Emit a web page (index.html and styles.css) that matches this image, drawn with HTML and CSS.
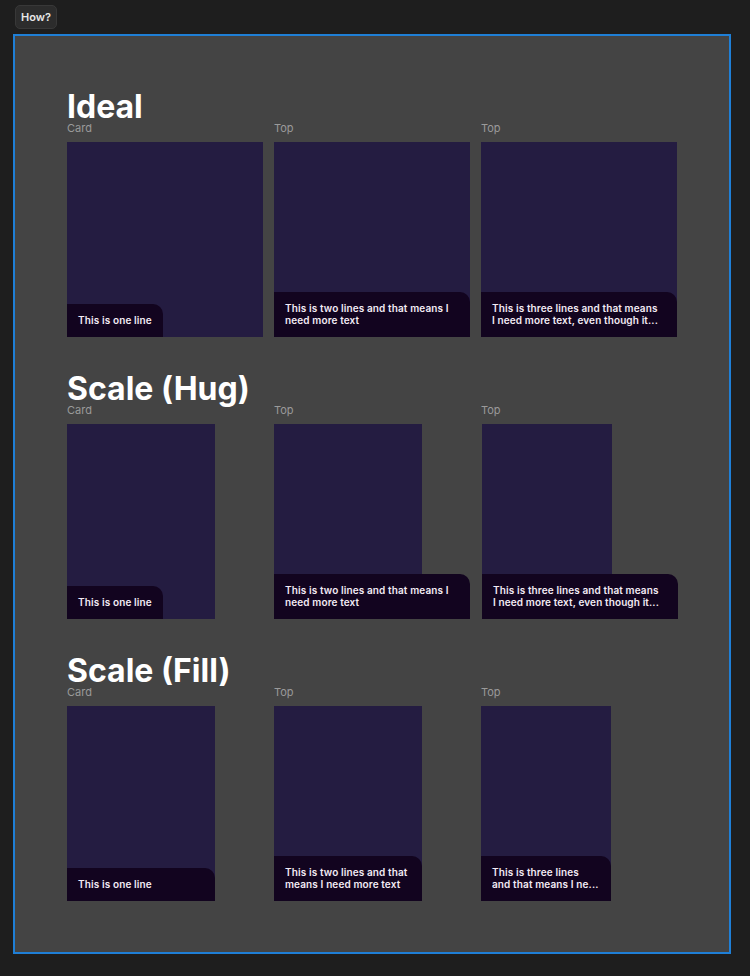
FILE: index.html
```html
<!DOCTYPE html>
<html lang="en">
<head>
<meta charset="utf-8">
<title>Card captions</title>
<link rel="stylesheet" href="styles.css">
</head>
<body>
<button class="how">How?</button>
<div class="frame">
  <section class="sec sec-ideal">
    <h2 class="title">Ideal</h2>
    <div class="row">
      <div class="col">
        <div class="lbl">Card</div>
        <div class="card"><div class="cap">This is one line</div></div>
      </div>
      <div class="col">
        <div class="lbl">Top</div>
        <div class="card"><div class="cap">This is two lines and that means I need more text</div></div>
      </div>
      <div class="col">
        <div class="lbl">Top</div>
        <div class="card"><div class="cap full"><span class="ln">This is three lines and that means</span><span class="ln trunc">I need more text, even though it...</span></div></div>
      </div>
    </div>
  </section>

  <section class="sec sec-hug">
    <h2 class="title">Scale (Hug)</h2>
    <div class="row">
      <div class="col">
        <div class="lbl">Card</div>
        <div class="card w148"><div class="cap">This is one line</div></div>
      </div>
      <div class="col">
        <div class="lbl">Top</div>
        <div class="card w148"><div class="cap">This is two lines and that means I need more text</div></div>
      </div>
      <div class="col">
        <div class="lbl">Top</div>
        <div class="card w130 nudge"><div class="cap full"><span class="ln">This is three lines and that means</span><span class="ln trunc">I need more text, even though it...</span></div></div>
      </div>
    </div>
  </section>

  <section class="sec sec-fill">
    <h2 class="title">Scale (Fill)</h2>
    <div class="row">
      <div class="col">
        <div class="lbl">Card</div>
        <div class="card w148"><div class="cap">This is one line</div></div>
      </div>
      <div class="col">
        <div class="lbl">Top</div>
        <div class="card w148"><div class="cap">This is two lines and that means I need more text</div></div>
      </div>
      <div class="col">
        <div class="lbl">Top</div>
        <div class="card w130"><div class="cap"><span class="ln">This is three lines</span><span class="ln trunc">and that means I ne...</span></div></div>
      </div>
    </div>
  </section>
</div>
</body>
</html>
```

FILE: styles.css
```css
* { box-sizing: border-box; }

html, body {
  margin: 0;
  background: #1e1e1e;
}

body {
  display: flex;
  flex-direction: column;
  align-items: flex-start;
  gap: 5px;
  padding: 5px 0 0 13px;
  font-family: Inter, "Noto Sans", sans-serif;
}

.how {
  margin: 0 0 0 2px;
  width: 42px;
  height: 24px;
  padding: 0;
  background: #2c2c2c;
  border: 1px solid #383838;
  border-radius: 5px;
  color: #e6e6e6;
  font-family: Inter, sans-serif;
  font-weight: 600;
  font-size: 11px;
}

.frame {
  width: 718px;
  height: 920px;
  border: 2px solid #1f7fd6;
  background: #444444;
  padding: 56px 0 51px 52px;
  display: flex;
  flex-direction: column;
  gap: 37px;
}

.title {
  margin: 0 0 1px;
  font-size: 32px;
  line-height: 29px;
  font-weight: 700;
  color: #ffffff;
}

.row {
  display: grid;
  grid-template-columns: repeat(3, 196px);
  column-gap: 11px;
}

.col {
  display: flex;
  flex-direction: column;
  gap: 7px;
}

.lbl {
  font-size: 11px;
  line-height: 13px;
  color: #9a9a9a;
}

.card {
  width: 196px;
  height: 195px;
  background: #241c41;
  display: flex;
  flex-direction: column;
  justify-content: flex-end;
  align-items: flex-start;
}

.card.w148 { width: 148px; }
.card.w130 { width: 130px; }
.card.nudge { margin-left: 1px; }

.cap {
  flex-shrink: 0;
  width: max-content;
  max-width: 196px;
  background: #12041f;
  border-top-right-radius: 10px;
  padding: 10px 11px 11px;
  color: #f2ebf4;
  font-size: 10px;
  line-height: 12px;
  font-weight: 600;
  letter-spacing: 0.12px;
}

.cap.full { width: 196px; }

.sec-fill .cap {
  width: 100%;
  max-width: 100%;
}

.ln { display: block; }

.trunc {
  white-space: nowrap;
  overflow: hidden;
  text-overflow: ellipsis;
}
```
